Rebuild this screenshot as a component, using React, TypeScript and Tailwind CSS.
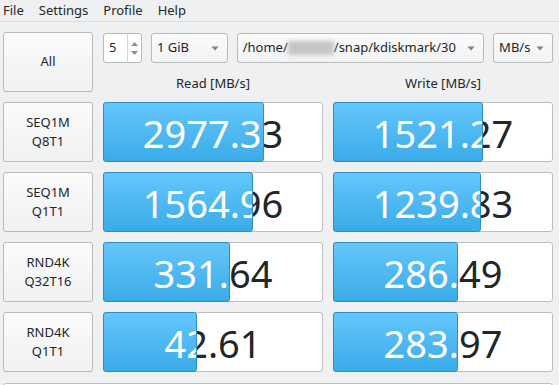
import React from "react";

const font = { fontFamily: '"Noto Sans", "DejaVu Sans", sans-serif' };

function Arrow() {
  return (
    <svg width="8" height="5" viewBox="0 0 8 5" className="shrink-0">
      <path d="M0.5 0.5 L7.5 0.5 L4 4.5 Z" fill="#7f8385" />
    </svg>
  );
}

function Combo({ children, className }: { children: React.ReactNode; className: string }) {
  return (
    <div
      className={
        "h-[30px] flex items-center justify-between rounded-[3px] border border-[#b9babc] bg-gradient-to-b from-[#fbfbfb] to-[#f1f2f3] pl-[5px] pr-[8px] text-[13px] text-[#232629] " +
        className
      }
    >
      {children}
    </div>
  );
}

function LabelButton({ a, b }: { a: string; b: string }) {
  return (
    <div className="h-[60px] flex flex-col items-center justify-center rounded-[3px] border border-[#b9babc] bg-gradient-to-b from-[#fbfbfb] to-[#f0f1f2] text-[13px] leading-[19px] text-[#232629]">
      <span>{a}</span>
      <span>{b}</span>
    </div>
  );
}

function Bar({ value, fill }: { value: string; fill: number }) {
  return (
    <div className="relative h-[60px] w-[220px]">
      <div className="absolute inset-0 rounded-[3px] border border-[#bcbec0] bg-white" />
      <div className="absolute inset-0 flex items-center justify-center pt-[2px] text-[38px] leading-none text-[#232629]">
        {value}
      </div>
      <div
        className="absolute left-0 top-0 h-[60px] overflow-hidden rounded-[3px] border border-[#2f8cc6] bg-gradient-to-b from-[#63c7fc] to-[#3aabe8]"
        style={{ width: fill }}
      >
        <div className="absolute left-[-1px] top-[-1px] flex h-[60px] w-[220px] items-center justify-center pt-[2px] text-[38px] leading-none text-white">
          {value}
        </div>
      </div>
    </div>
  );
}

const rows = [
  { a: "SEQ1M", b: "Q8T1", r: "2977.33", rf: 161, w: "1521.27", wf: 150 },
  { a: "SEQ1M", b: "Q1T1", r: "1564.96", rf: 150, w: "1239.83", wf: 148 },
  { a: "RND4K", b: "Q32T16", r: "331.64", rf: 127, w: "286.49", wf: 125 },
  { a: "RND4K", b: "Q1T1", r: "42.61", rf: 94, w: "283.97", wf: 125 },
];

export default function App() {
  return (
    <div className="h-[385px] w-[559px] overflow-hidden bg-[#eff0f1] text-[#232629]" style={font}>
      <div className="flex h-[22px] items-center gap-[15px] border-b border-[#dcdddf] pl-[3px] text-[13px]">
        <span>File</span>
        <span>Settings</span>
        <span>Profile</span>
        <span>Help</span>
      </div>
      <div className="pl-[3px] pt-[10px]">
        <div className="grid grid-cols-[90px_220px_220px] gap-x-[10px] gap-y-[10px]">
          <div className="flex h-[60px] items-center justify-center rounded-[3px] border border-[#b9babc] bg-gradient-to-b from-[#fbfbfb] to-[#f0f1f2] text-[13px]">
            All
          </div>
          <div className="col-span-2 flex h-[60px] flex-col">
            <div className="mt-[1px] flex h-[30px] items-center">
              <div className="flex h-[30px] w-[39px] items-stretch rounded-[3px] border border-[#b9babc] bg-white text-[13px]">
                <span className="flex flex-1 items-center pl-[5px]">5</span>
                <div className="flex w-[14px] flex-col items-center justify-center gap-[5px] border-l border-[#d4d5d7]">
                  <svg width="7" height="4" viewBox="0 0 7 4">
                    <path d="M0 4 L3.5 0 L7 4 Z" fill="#8a8d8f" />
                  </svg>
                  <svg width="7" height="4" viewBox="0 0 7 4">
                    <path d="M0 0 L7 0 L3.5 4 Z" fill="#8a8d8f" />
                  </svg>
                </div>
              </div>
              <Combo className="ml-[9px] w-[77px]">
                <span>1 GiB</span>
                <Arrow />
              </Combo>
              <Combo className="ml-[9px] w-[248px]">
                <span className="flex items-center whitespace-nowrap">
                  /home/
                  <span className="inline-block h-[14px] w-[46px] bg-[#c4c5c6] blur-[2px]" />
                  /snap/kdiskmark/30
                </span>
                <Arrow />
              </Combo>
              <Combo className="ml-[9px] w-[60px]">
                <span>MB/s</span>
                <Arrow />
              </Combo>
            </div>
            <div className="mt-[11px] grid grid-cols-[220px_220px] gap-x-[10px] text-[13px]">
              <span className="text-center">Read [MB/s]</span>
              <span className="text-center">Write [MB/s]</span>
            </div>
          </div>
          {rows.map((row, i) => (
            <React.Fragment key={i}>
              <LabelButton a={row.a} b={row.b} />
              <Bar value={row.r} fill={row.rf} />
              <Bar value={row.w} fill={row.wf} />
            </React.Fragment>
          ))}
        </div>
        <div className="mt-[11px] h-[10px] w-[550px] rounded-t-[3px] border border-[#bcbec0] bg-white" />
      </div>
    </div>
  );
}
